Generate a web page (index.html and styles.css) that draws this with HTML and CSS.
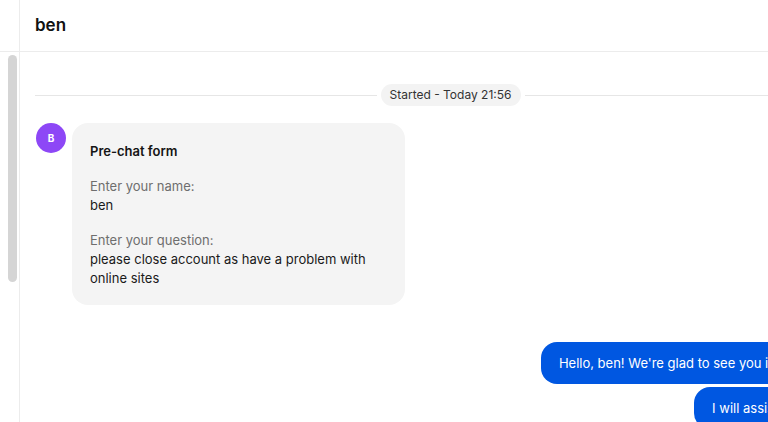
FILE: index.html
```html
<!DOCTYPE html>
<html lang="en">
<head>
<meta charset="utf-8">
<title>ben</title>
<link rel="stylesheet" href="styles.css">
</head>
<body>
<div class="app">
  <aside class="side">
    <div class="side-head"></div>
    <div class="side-body">
      <div class="thumb"></div>
    </div>
  </aside>
  <main class="chat">
    <header class="chat-head">
      <h1 class="chat-title">ben</h1>
    </header>
    <section class="messages">
      <div class="divider">
        <span class="line"></span>
        <span class="pill">Started - Today 21:56</span>
        <span class="line"></span>
      </div>
      <div class="row in">
        <div class="avatar">B</div>
        <div class="bubble form">
          <div class="form-title">Pre-chat form</div>
          <div class="field">
            <div class="label">Enter your name:</div>
            <div class="value">ben</div>
          </div>
          <div class="field">
            <div class="label">Enter your question:</div>
            <div class="value">please close account as have a problem with online sites</div>
          </div>
        </div>
      </div>
      <div class="out-group">
        <div class="bubble out">Hello, ben! We're glad to see you in our chat!</div>
        <div class="bubble out">I will assist you now</div>
      </div>
    </section>
  </main>
</div>
</body>
</html>
```

FILE: styles.css
```css
* { box-sizing: border-box; }
html, body {
  margin: 0;
  padding: 0;
  background: #ffffff;
  overflow: hidden;
  height: 100%;
}
body {
  font-family: Inter, "Noto Sans", "Liberation Sans", sans-serif;
  color: #1a1a1a;
}
.app {
  display: flex;
  width: 881px;
  height: 422px;
  overflow: hidden;
}
.side {
  width: 20px;
  flex: none;
  border-right: 1px solid #ececec;
  display: flex;
  flex-direction: column;
}
.side-head {
  height: 52px;
  flex: none;
  border-bottom: 1px solid #ececec;
}
.side-body {
  padding: 3px 0 0 8px;
}
.thumb {
  width: 9px;
  height: 227px;
  border-radius: 5px;
  background: #d5d5d5;
}
.chat {
  flex: 1;
  display: flex;
  flex-direction: column;
  min-width: 0;
}
.chat-head {
  height: 52px;
  flex: none;
  border-bottom: 1px solid #ececec;
  display: flex;
  align-items: center;
  padding: 0 0 2px 15px;
}
.chat-title {
  margin: 0;
  font-size: 17px;
  font-weight: 600;
  color: #111;
}
.messages {
  padding: 32px 15px 0 15px;
  display: flex;
  flex-direction: column;
  flex: none;
}
.divider {
  display: flex;
  align-items: center;
  gap: 4px;
}
.line {
  flex: 1;
  height: 1px;
  background: #e6e6e6;
}
.pill {
  background: #f3f3f3;
  border-radius: 11px;
  height: 22px;
  line-height: 22px;
  padding: 0 9px;
  font-size: 12px;
  color: #333;
}
.row.in {
  display: flex;
  align-items: flex-start;
  gap: 6px;
  margin-top: 17px;
  padding-left: 1px;
}
.avatar {
  width: 30px;
  height: 30px;
  border-radius: 50%;
  background: #8d47f6;
  color: #fff;
  font-size: 10px;
  font-weight: 700;
  display: flex;
  align-items: center;
  justify-content: center;
  flex: none;
}
.bubble {
  font-size: 13px;
  line-height: 19px;
}
.form {
  width: 333px;
  background: #f4f4f4;
  border-radius: 16px;
  padding: 19px 18px 17px 18px;
  display: flex;
  flex-direction: column;
  gap: 16px;
}
.form-title {
  font-weight: 600;
  color: #151515;
}
.label {
  color: #6e6e6e;
}
.value {
  color: #1a1a1a;
}
.out-group {
  margin-top: 37px;
  margin-right: 14px;
  display: flex;
  flex-direction: column;
  align-items: flex-end;
  gap: 3px;
}
.bubble.out {
  background: #0057e1;
  color: #fff;
  border-radius: 16px;
  padding: 12px 18px;
  line-height: 18px;
  white-space: nowrap;
}
```
